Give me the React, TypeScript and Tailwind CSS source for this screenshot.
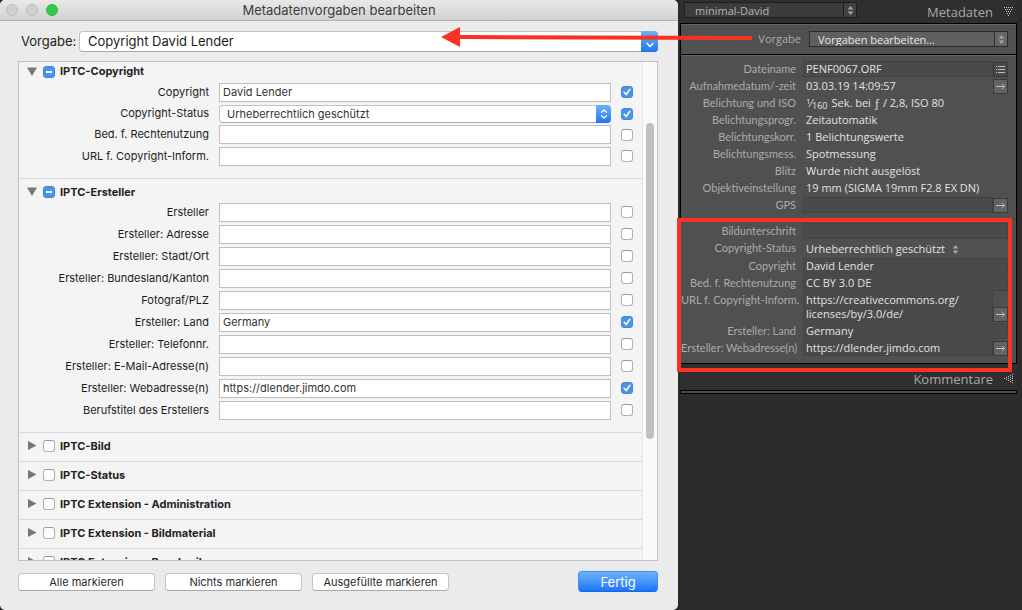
import type { ReactNode } from "react";

type Field = { label: string; value?: string; checked?: boolean; status?: boolean; tight?: boolean };

const copyrightFields: Field[] = [
  { label: "Copyright", value: "David Lender", checked: true },
  { label: "Copyright-Status", checked: true, status: true, tight: true },
  { label: "Bed. f. Rechtenutzung", tight: true },
  { label: "URL f. Copyright-Inform." },
];

const creatorFields: Field[] = [
  { label: "Ersteller" },
  { label: "Ersteller: Adresse" },
  { label: "Ersteller: Stadt/Ort" },
  { label: "Ersteller: Bundesland/Kanton" },
  { label: "Fotograf/PLZ" },
  { label: "Ersteller: Land", value: "Germany", checked: true },
  { label: "Ersteller: Telefonnr." },
  { label: "Ersteller: E-Mail-Adresse(n)" },
  { label: "Ersteller: Webadresse(n)", value: "https://dlender.jimdo.com", checked: true },
  { label: "Berufstitel des Erstellers" },
];

const collapsedSections = [
  "IPTC-Bild",
  "IPTC-Status",
  "IPTC Extension - Administration",
  "IPTC Extension - Bildmaterial",
  "IPTC Extension - Beschreibung",
];

function Check({ id, label, checked, mixed }: { id: string; label?: string; checked?: boolean; mixed?: boolean }) {
  return (
    <span className="relative flex size-3 shrink-0">
      <input
        id={id}
        type="checkbox"
        defaultChecked={checked || mixed}
        aria-label={label}
        className="peer size-3 appearance-none rounded-[3px] border border-[#b0b0b0] border-t-[#9a9a9a] bg-white checked:border-[#3f87dd] checked:bg-[#4a94ea]"
      />
      <svg viewBox="0 0 12 12" className="pointer-events-none absolute inset-0 hidden size-3 peer-checked:block" fill="none" stroke="white">
        {mixed ? <path d="M3 6H9" strokeWidth="1.8" /> : <path d="M3.2 6.3L5.2 8.6L8.8 3.4" strokeWidth="1.6" strokeLinecap="round" strokeLinejoin="round" />}
      </svg>
    </span>
  );
}

function FieldRow({ field, id }: { field: Field; id: string }) {
  return (
    <div className={`flex items-center gap-[10px] pr-[9px] ${field.tight ? "h-[21px]" : "h-[22px]"}`}>
      <label htmlFor={id} className="w-[190px] shrink-0 text-right whitespace-nowrap text-[#1c1c1c]">
        {field.label}
      </label>
      {field.status ? (
        <span className="relative flex h-[18px] min-w-0 flex-1">
          <select id={id} className="h-[18px] w-full appearance-none rounded-[4px] border border-[#c3c3c3] border-b-[#aaaaaa] bg-white pl-[7px] text-[#333]">
            <option>Urheberrechtlich geschützt</option>
          </select>
          <span className="pointer-events-none absolute inset-y-0 right-0 flex w-[15px] items-center justify-center rounded-r-[4px] bg-linear-to-b from-[#6cb0f6] to-[#1e76f2]">
            <svg viewBox="0 0 8 10" className="h-[10px] w-2" fill="none" stroke="white" strokeWidth="1.3" strokeLinecap="round" strokeLinejoin="round">
              <path d="M1.5 3.3L4 1L6.5 3.3M1.5 6.7L4 9L6.5 6.7" />
            </svg>
          </span>
        </span>
      ) : (
        <input id={id} type="text" defaultValue={field.value} className="h-[19px] min-w-0 flex-1 border border-[#bfbfbf] bg-white px-[3px] text-[#333]" />
      )}
      <Check id={`${id}-on`} label={`${field.label} anwenden`} checked={field.checked} />
    </div>
  );
}

function SectionHeader({ title, id, open, first }: { title: string; id: string; open?: boolean; first?: boolean }) {
  return (
    <div className={`flex items-center pl-2 ${first ? "h-[19px]" : "h-[22px] pt-1"}`}>
      <button type="button" aria-label={title} aria-expanded={!!open} className="flex size-[10px]">
        <svg viewBox="0 0 10 10" className="size-[10px]" fill="#777777">
          {open ? <path d="M0 0.5H10L5 9Z" /> : <path d="M1 0V9L9.5 4.5Z" />}
        </svg>
      </button>
      <span className="ml-[6px] flex">
        <Check id={id} mixed={open} />
      </span>
      <label htmlFor={id} className="ml-[5px] font-bold whitespace-nowrap text-[#222]">
        {title}
      </label>
    </div>
  );
}

function PushButton({ children }: { children: ReactNode }) {
  return (
    <button type="button" className="h-[18px] w-[137px] rounded-[4px] border border-[#c4c4c4] border-b-[#a8a8a8] bg-white text-[11px] leading-4 whitespace-nowrap text-[#2a2a2a]">
      {children}
    </button>
  );
}

function PresetDialog() {
  return (
    <main className="flex min-h-0 min-w-0 flex-1 flex-col overflow-hidden rounded-[5px] bg-[#ebebeb] font-[Inter,sans-serif] text-[11px]">
      <header className="flex h-[21px] shrink-0 items-center border-b border-[#b4b4b4] bg-linear-to-b from-[#e8e8e8] to-[#d2d2d2] px-[6px]">
        <div className="flex w-[52px] shrink-0 gap-2">
          <button type="button" aria-label="Schließen" className="size-3 rounded-full border border-[#bcbcbc] bg-[#d0d0d0]" />
          <button type="button" aria-label="Minimieren" className="size-3 rounded-full border border-[#bcbcbc] bg-[#d0d0d0]" />
          <button type="button" aria-label="Zoomen" className="size-3 rounded-full border border-[#2fb344] bg-[#34c84a]" />
        </div>
        <h1 className="flex-1 pr-[52px] text-center text-[13px] leading-5 text-[#3c3c3c]">Metadatenvorgaben bearbeiten</h1>
      </header>

      <div className="flex shrink-0 items-center gap-[5px] pt-[10px] pr-5 pb-[9px] pl-[21px] text-[13px] text-[#1c1c1c]">
        <label htmlFor="preset" className="w-[53px] shrink-0 whitespace-nowrap">
          Vorgabe:
        </label>
        <span className="relative flex min-w-0 flex-1">
          <select id="preset" className="h-[21px] w-full appearance-none rounded-[4px] border border-[#c3c3c3] border-b-[#a8a8a8] bg-white pl-2">
            <option>Copyright David Lender</option>
          </select>
          <span className="pointer-events-none absolute inset-y-0 right-0 flex w-[17px] items-end justify-center rounded-r-[4px] bg-linear-to-b from-[#6cb0f6] to-[#1e76f2] pb-1">
            <svg viewBox="0 0 8 6" className="h-[6px] w-2" fill="none" stroke="white" strokeWidth="1.4" strokeLinecap="round" strokeLinejoin="round">
              <path d="M1 1.3L4 4.5L7 1.3" />
            </svg>
          </span>
        </span>
      </div>

      <div className="mr-5 ml-[18px] flex min-h-0 flex-1 border border-[#c0c0c0] bg-[#f4f4f4]">
        <div className="min-w-0 flex-1 overflow-hidden">
          <section className="pb-[11px]">
            <SectionHeader title="IPTC-Copyright" id="sec-copyright" open first />
            {copyrightFields.map((f, i) => (
              <FieldRow key={f.label} field={f} id={`copyright-${i}`} />
            ))}
          </section>
          <section className="border-t border-[#d9d9d9] pb-[11px]">
            <SectionHeader title="IPTC-Ersteller" id="sec-creator" open />
            {creatorFields.map((f, i) => (
              <FieldRow key={f.label} field={f} id={`creator-${i}`} />
            ))}
          </section>
          {collapsedSections.map((title, i) => (
            <section key={title} className="border-t border-[#d9d9d9] pb-[6px]">
              <SectionHeader title={title} id={`sec-${i}`} />
            </section>
          ))}
        </div>
        <div className="w-[15px] shrink-0 border-l border-[#e6e6e6] bg-[#fafafa] pt-[61px] pl-[3px]">
          <div className="h-[316px] w-2 rounded-full bg-[#c1c1c1]" />
        </div>
      </div>

      <footer className="flex shrink-0 items-center gap-[10px] pt-[10px] pr-5 pb-[18px] pl-[18px]">
        <PushButton>Alle markieren</PushButton>
        <PushButton>Nichts markieren</PushButton>
        <PushButton>Ausgefüllte markieren</PushButton>
        <button type="button" className="ml-auto h-[21px] w-20 rounded-[4px] border border-[#3f8cf0] border-b-[#1f66dc] bg-linear-to-b from-[#6cb2f8] to-[#1a74fb] text-[13px] leading-[18px] text-white">
          Fertig
        </button>
      </footer>
    </main>
  );
}

function UpDown() {
  return (
    <svg viewBox="0 0 7 9" className="h-[9px] w-[7px]" fill="#a4a4a4">
      <path d="M3.5 0L6.3 3.6H0.7ZM3.5 9L6.3 5.4H0.7Z" />
    </svg>
  );
}

function DotTriangle({ left }: { left?: boolean }) {
  const dots = [5, 4, 3, 2, 1].flatMap((count, row) =>
    Array.from({ length: count }, (_, i) => {
      const along = row + i * 2;
      const across = row * 2;
      return left ? [8 - across, along] : [along, across];
    }),
  );
  return (
    <svg viewBox="0 0 10 10" className="size-[10px]" fill="#c4c4c4" shapeRendering="crispEdges">
      {dots.map(([x, y]) => (
        <rect key={`${x}-${y}`} x={x} y={y} width="1" height="1" />
      ))}
    </svg>
  );
}

function ActionButton({ label, list }: { label: string; list?: boolean }) {
  return (
    <button type="button" aria-label={label} className={`flex size-[15px] shrink-0 items-center justify-center border border-[#3a3a3a] ${list ? "bg-[#484848]" : "bg-[#636363]"}`}>
      <svg viewBox="0 0 11 11" className="size-[11px]" fill="none" stroke="#c0c0c0">
        {list ? <path d="M1 2.5H2M3 2.5H10M1 5.5H2M3 5.5H10M1 8.5H2M3 8.5H10" /> : <path d="M1 5.5H9.5M7 3L9.7 5.5L7 8" />}
      </svg>
    </button>
  );
}

type Meta = { label: string; value?: string; kind: "text" | "input" | "area" | "select"; shutter?: boolean; action?: "list" | "arrow" };

const fileMeta: Meta[] = [
  { label: "Dateiname", value: "PENF0067.ORF", kind: "input", action: "list" },
  { label: "Aufnahmedatum/-zeit", value: "03.03.19 14:09:57", kind: "text", action: "arrow" },
  { label: "Belichtung und ISO", value: "Sek. bei ƒ / 2,8, ISO 80", kind: "text", shutter: true },
  { label: "Belichtungsprogr.", value: "Zeitautomatik", kind: "text" },
  { label: "Belichtungskorr.", value: "1 Belichtungswerte", kind: "text" },
  { label: "Belichtungsmess.", value: "Spotmessung", kind: "text" },
  { label: "Blitz", value: "Wurde nicht ausgelöst", kind: "text" },
  { label: "Objektiveinstellung", value: "19 mm (SIGMA 19mm F2.8 EX DN)", kind: "text" },
  { label: "GPS", value: "", kind: "input", action: "arrow" },
];

const iptcMeta: Meta[] = [
  { label: "Bildunterschrift", value: "", kind: "input" },
  { label: "Copyright-Status", value: "Urheberrechtlich geschützt", kind: "select" },
  { label: "Copyright", value: "David Lender", kind: "input" },
  { label: "Bed. f. Rechtenutzung", value: "CC BY 3.0 DE", kind: "input" },
  { label: "URL f. Copyright-Inform.", value: "https://creativecommons.org/\nlicenses/by/3.0/de/", kind: "area", action: "arrow" },
  { label: "Ersteller: Land", value: "Germany", kind: "input" },
  { label: "Ersteller: Webadresse(n)", value: "https://dlender.jimdo.com", kind: "input", action: "arrow" },
];

function MetaRow({ meta, id }: { meta: Meta; id: string }) {
  const labelStyle = "w-[115px] shrink-0 text-right font-[Lato,sans-serif] leading-[16px] whitespace-nowrap text-[#ababab]";
  return (
    <div className="flex min-h-[17px] items-start gap-[7px] pr-2 text-[11px]">
      {meta.kind === "text" ? (
        <span className={labelStyle}>{meta.label}</span>
      ) : (
        <label htmlFor={id} className={labelStyle}>
          {meta.label}
        </label>
      )}
      <div className={`flex min-w-0 flex-1 items-end ${meta.kind === "area" ? "pb-px" : ""}`}>
        {meta.kind === "text" && (
          <span className="min-w-0 flex-1 pl-[3px] leading-[16px] whitespace-nowrap text-[#e2e2e2]">
            {meta.shutter && (
              <span className="mr-1 text-[9px]">
                <sup className="-top-[3px] text-[8px]">1</sup>
                <span className="text-[11px]">⁄</span>
                <sub className="-bottom-[2px] text-[9px]">160</sub>
              </span>
            )}
            {meta.value}
          </span>
        )}
        {meta.kind === "input" && (
          <input id={id} type="text" defaultValue={meta.value} className="h-4 min-w-0 flex-1 border border-[#434343] bg-[#4a4a4a] px-[2px] text-[#e2e2e2]" />
        )}
        {meta.kind === "area" && (
          <textarea id={id} rows={2} defaultValue={meta.value} className="h-[30px] min-w-0 flex-1 resize-none overflow-hidden border border-[#434343] bg-[#4a4a4a] px-[2px] leading-[14px] text-[#e2e2e2]" />
        )}
        {meta.kind === "select" && (
          <span className="flex h-[18px] items-center gap-[6px] pl-[3px]">
            <select id={id} className="appearance-none bg-transparent text-[#e2e2e2]">
              <option>{meta.value}</option>
            </select>
            <UpDown />
          </span>
        )}
        {meta.action && <ActionButton label={`${meta.label}: Aktion`} list={meta.action === "list"} />}
      </div>
    </div>
  );
}

function DarkSelect({ id, label, value, bright }: { id: string; label?: string; value: string; bright?: boolean }) {
  return (
    <span className="relative flex min-w-0 flex-1">
      <select
        id={id}
        aria-label={label}
        className={`h-4 w-full appearance-none border text-[11px] ${bright ? "border-[#2c2c2c] bg-[#606060] pl-2 text-[#e8e8e8]" : "border-[#1d1d1d] bg-[#3c3c3c] pl-[10px] text-[#b4b4b4]"}`}
      >
        <option>{value}</option>
      </select>
      <span className={`pointer-events-none absolute inset-y-0 right-0 flex w-[14px] items-center justify-center border ${bright ? "border-[#2c2c2c] bg-[#666666]" : "border-[#1d1d1d] bg-[#414141]"}`}>
        <UpDown />
      </span>
    </span>
  );
}

function MetadataPanel() {
  return (
    <aside className="w-[344px] shrink-0 bg-[#2b2b2b] pr-[5px] pl-[2px] font-['Open_Sans',sans-serif]">
      <header className="flex h-[23px] items-center bg-[#2f2f2f] pl-1">
        <div className="flex w-[173px] pb-[3px]">
          <DarkSelect id="field-set" label="Metadatensatz" value="minimal-David" />
        </div>
        <h2 className="ml-auto text-[13px] leading-5 text-[#a8a8a8]">Metadaten</h2>
        <button type="button" aria-label="Metadaten einklappen" className="mr-[3px] ml-[11px]">
          <DotTriangle />
        </button>
      </header>

      <div className="border border-black bg-[#505050]">
        <div className="relative flex h-[31px] items-center gap-2 border-b border-black pr-2 shadow-[inset_0_1px_0_#646464]">
          <label htmlFor="meta-preset" className="w-[120px] shrink-0 text-right text-[11px] text-[#ababab]">
            Vorgabe
          </label>
          <DarkSelect id="meta-preset" value="Vorgaben bearbeiten…" bright />
          <svg viewBox="0 0 311 20" className="pointer-events-none absolute top-[3px] -left-[240px] h-5 w-[311px]" fill="#fb3124">
            <path d="M0 10L19 0V8L311 9V13L19 12V20Z" />
          </svg>
        </div>
        <div className="pt-[6px] pb-1 shadow-[inset_0_1px_0_#646464]">
          {fileMeta.map((m, i) => (
            <MetaRow key={m.label} meta={m} id={`file-${i}`} />
          ))}
        </div>
        <div className="relative border-t border-[#434343] pt-[4px] pb-[6px]">
          {iptcMeta.map((m, i) => (
            <MetaRow key={m.label} meta={m} id={`iptc-${i}`} />
          ))}
          <div className="pointer-events-none absolute -top-[1px] right-1 -bottom-[9px] -left-1 border-4 border-[#fb3124]" />
        </div>
      </div>

      <header className="flex h-[26px] items-end bg-[#2f2f2f] pb-px">
        <h2 className="ml-auto text-[13px] leading-5 text-[#a8a8a8]">Kommentare</h2>
        <button type="button" aria-label="Kommentare ausklappen" className="mr-[3px] mb-[5px] ml-[11px] flex">
          <DotTriangle left />
        </button>
      </header>
      <div className="h-1 border border-black bg-[#4a4a4a]" />
    </aside>
  );
}

export default function App() {
  return (
    <div className="flex h-screen overflow-hidden bg-[#1f1f1f]">
      <PresetDialog />
      <MetadataPanel />
    </div>
  );
}
